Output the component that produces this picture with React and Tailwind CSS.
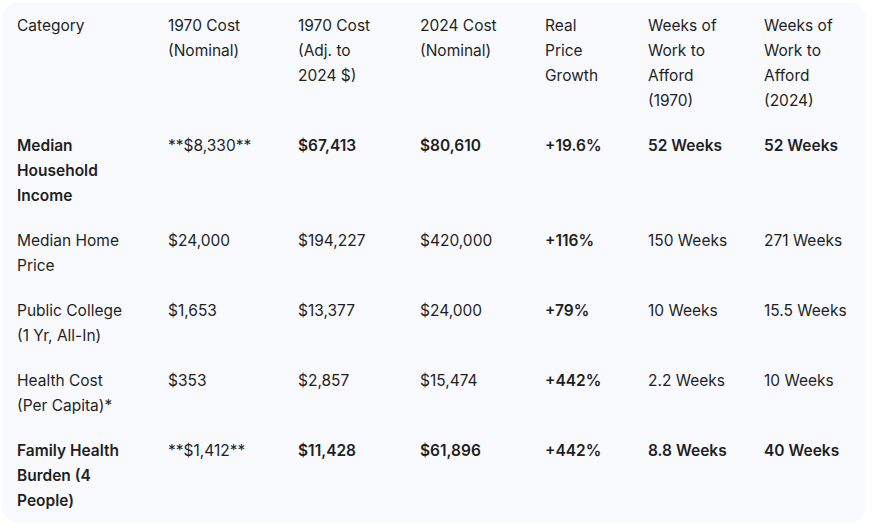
const COLS = [151, 130, 122, 125, 103, 116, 117];

const HEADERS = [
  "Category",
  "1970 Cost (Nominal)",
  "1970 Cost (Adj. to 2024 $)",
  "2024 Cost (Nominal)",
  "Real Price Growth",
  "Weeks of Work to Afford (1970)",
  "Weeks of Work to Afford (2024)",
];

// bold: which cells are bold
const ROWS = [
  {
    cells: ["Median Household Income", "**$8,330**", "$67,413", "$80,610", "+19.6%", "52 Weeks", "52 Weeks"],
    bold: [1, 0, 1, 1, 1, 1, 1],
  },
  {
    cells: ["Median Home Price", "$24,000", "$194,227", "$420,000", "+116%", "150 Weeks", "271 Weeks"],
    bold: [0, 0, 0, 0, 1, 0, 0],
  },
  {
    cells: ["Public College (1 Yr, All-In)", "$1,653", "$13,377", "$24,000", "+79%", "10 Weeks", "15.5 Weeks"],
    bold: [0, 0, 0, 0, 1, 0, 0],
  },
  {
    cells: ["Health Cost (Per Capita)*", "$353", "$2,857", "$15,474", "+442%", "2.2 Weeks", "10 Weeks"],
    bold: [0, 0, 0, 0, 1, 0, 0],
  },
  {
    cells: ["Family Health Burden (4 People)", "**$1,412**", "$11,428", "$61,896", "+442%", "8.8 Weeks", "40 Weeks"],
    bold: [1, 0, 1, 1, 1, 1, 1],
  },
];

const cellCls = (i) =>
  `pl-[15px] ${i === 0 ? "pr-[22px]" : "pr-[15px]"} py-[10px] align-top text-left`;

export default function App() {
  return (
    <div className="min-h-screen bg-white pl-[2px] pt-[3px] font-['Inter',sans-serif] text-[15.5px] leading-[25px] text-[#1f1f1f]">
      <div className="w-[864px] rounded-2xl bg-[#f8fafd]">
        <table className="w-full table-fixed border-collapse">
          <colgroup>
            {COLS.map((w, i) => (
              <col key={i} style={{ width: w }} />
            ))}
          </colgroup>
          <thead>
            <tr>
              {HEADERS.map((h, i) => (
                <th key={h} className={`${cellCls(i)} font-normal`}>
                  {h}
                </th>
              ))}
            </tr>
          </thead>
          <tbody>
            {ROWS.map((r, ri) => (
              <tr key={ri}>
                {r.cells.map((c, ci) => (
                  <td key={ci} className={`${cellCls(ci)} ${r.bold[ci] ? "font-semibold" : "font-normal"}`}>
                    {c}
                  </td>
                ))}
              </tr>
            ))}
          </tbody>
        </table>
      </div>
    </div>
  );
}
